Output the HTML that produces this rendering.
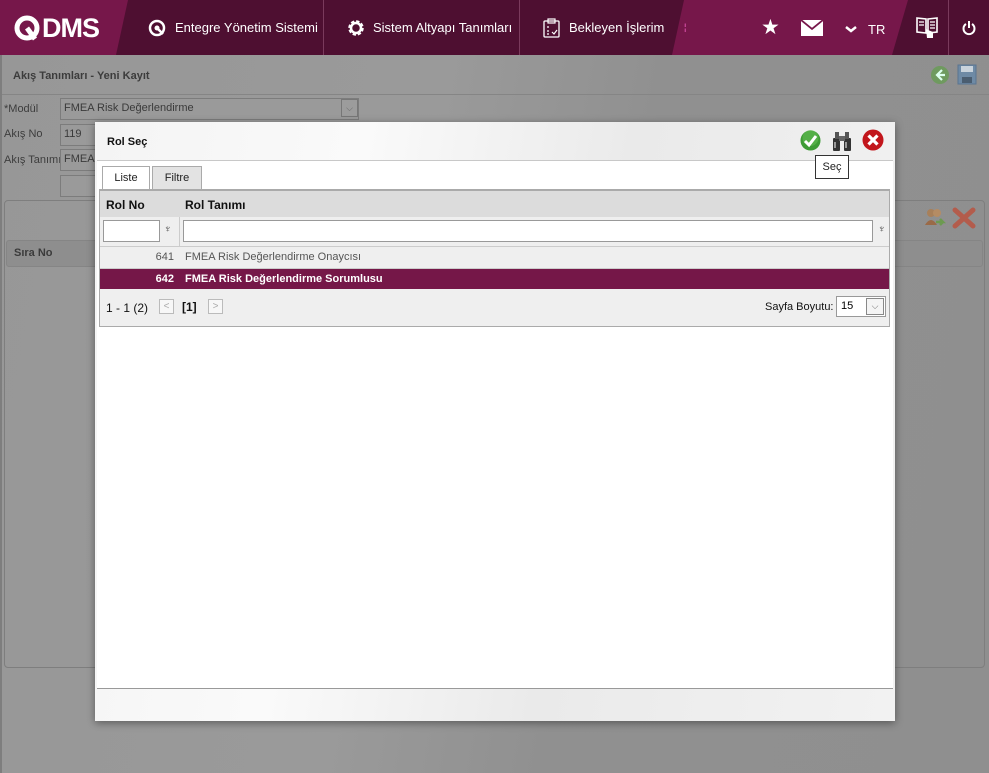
<!DOCTYPE html>
<html><head><meta charset="utf-8"><style>
*{box-sizing:border-box;margin:0;padding:0}
body{width:989px;height:773px;overflow:hidden;font-family:"Liberation Sans",sans-serif;font-size:12px;position:relative;background:#969696}
.abs{position:absolute}
.hdr{left:0;top:0;width:989px;height:55px;background:#4e0f31;color:#fff;overflow:hidden}
.hdr .t{position:absolute;top:20px;font-size:13px;color:#fff}
.sep{position:absolute;top:0;width:1px;height:55px;background:#7a3a5c}
.pg{color:#444}
.inp{position:absolute;border:1px solid #7c7c7c;background:#9a9a9a;color:#3a3a3a;font-size:11px;padding:3px 3px}
.lbl{position:absolute;color:#3d3d3d;font-size:11px}
.modal{left:95px;top:122px;width:800px;height:599px;background:linear-gradient(100deg,#f4f4f4 0%,#fafafa 30%,#eaeaea 60%,#f2f2f2 100%);box-shadow:0 2px 8px rgba(0,0,0,.4)}
.inner{position:absolute;left:2px;top:38px;width:796px;height:529px;background:#fff;border-top:1px solid #c8c8c8;border-bottom:1px solid #999}
.tab{position:absolute;top:5px;height:23px;border:1px solid #aaa;border-bottom:none;font-size:11px;padding:5px 0;text-align:center;color:#222}
.grid{position:absolute;left:2px;top:28px;width:791px;height:138px;border:1px solid #aaa;border-top:2px solid #aaa;background:#efefef}
.ghd{position:absolute;left:0;top:0;width:789px;height:26px;background:#dcdcdc;font-weight:bold;font-size:12px;color:#111}
.fi{position:absolute;top:31px;height:22px;background:#fff;border:1px solid #999}
.row{position:absolute;left:0;width:789px;height:21px;font-size:11px;line-height:20px}
</style></head><body>
<!-- header -->
<div class="abs hdr">
  <div class="abs" style="left:0;top:0;width:128px;height:55px;background:#76174a;clip-path:polygon(0 0,100% 0,116px 100%,0 100%)"></div>
  <div class="abs" style="left:172px;top:0;width:236px;height:55px;background:#76174a;clip-path:polygon(12px 0,100% 0,220px 100%,0 100%);left:672px"></div>
  <div class="abs" style="left:14px;top:13px;font-size:27px;font-weight:bold;letter-spacing:-1px;color:#fff;display:flex;align-items:center">
    <svg width="26" height="28" viewBox="0 0 26 28"><circle cx="13" cy="13" r="10" fill="none" stroke="#fff" stroke-width="5"/><path d="M13 13 L21 24" stroke="#fff" stroke-width="5"/></svg><span style="margin-left:2px">DMS</span></div>
  <svg class="abs" style="left:148px;top:19px" width="18" height="18" viewBox="0 0 18 18"><circle cx="9" cy="9" r="7" fill="none" stroke="#fff" stroke-width="2.5"/><circle cx="9" cy="9" r="2.5" fill="#fff"/><path d="M10 10 L15 15" stroke="#fff" stroke-width="2.5"/></svg>
  <div class="t" style="left:175px">Entegre Yönetim Sistemi</div>
  <div class="sep" style="left:323px"></div>
  <svg class="abs" style="left:346px;top:18px" width="20" height="20" viewBox="0 0 20 20"><circle cx="10" cy="10" r="6" fill="none" stroke="#fff" stroke-width="3.5" stroke-dasharray="3 1.7"/><circle cx="10" cy="10" r="5" fill="none" stroke="#fff" stroke-width="2.5"/></svg>
  <div class="t" style="left:373px">Sistem Altyapı Tanımları</div>
  <div class="sep" style="left:519px"></div>
  <svg class="abs" style="left:543px;top:18px" width="17" height="20" viewBox="0 0 17 20"><rect x="1" y="3" width="15" height="16" rx="1" fill="none" stroke="#fff" stroke-width="1.3"/><rect x="5" y="1" width="7" height="4" fill="none" stroke="#fff" stroke-width="1.2"/><path d="M4 9h2M4 13h2M4 16h2M9 14l2 2 3-4" stroke="#fff" stroke-width="1.2" fill="none"/></svg>
  <div class="t" style="left:569px">Bekleyen İşlerim</div>
  <div class="t" style="left:684px;font-size:9px;top:22px;color:#f6c">¦</div>
  <div class="t" style="left:761px;top:15px;font-size:21px">★</div>
  <svg class="abs" style="left:801px;top:20px" width="22" height="16" viewBox="0 0 22 16"><rect width="22" height="16" fill="#fff"/><path d="M0 0 L11 9 L22 0" stroke="#76174a" stroke-width="1.8" fill="none"/></svg>
  <svg class="abs" style="left:845px;top:26px" width="12" height="8" viewBox="0 0 12 8"><path d="M1 1 L6 5 L11 1" stroke="#fff" stroke-width="2.5" fill="none"/></svg>
  <div class="t" style="left:868px;font-size:13px;top:22px">TR</div>
  <svg class="abs" style="left:916px;top:16px" width="22" height="24" viewBox="0 0 22 24"><path d="M1 2 L10 3 L10 17 L1 16Z M12 3 L21 2 L21 16 L12 17Z" fill="none" stroke="#fff" stroke-width="1.6"/><path d="M3 6h5M3 9h5M14 6h5M14 9h5M14 12h5" stroke="#fff" stroke-width="1.2"/><path d="M10 13 L11 22 L17 22 L17 16 L12 14Z" fill="#fff"/></svg>
  <div class="sep" style="left:948px"></div>
  <svg class="abs" style="left:962px;top:20px" width="14" height="16" viewBox="0 0 14 16"><path d="M4 4 A5.5 5.5 0 1 0 10 4" stroke="#fff" stroke-width="2" fill="none"/><path d="M7 1 V8" stroke="#fff" stroke-width="2"/></svg>
</div>
<!-- page behind -->
<div class="abs" style="left:0;top:55px;width:989px;height:718px;background:linear-gradient(100deg,#979797 0%,#9a9a9a 40%,#909090 60%,#8f8f8f 100%)"></div>
<div class="abs" style="left:0;top:55px;width:2px;height:718px;background:#7e7e7e"></div>
<div class="lbl" style="left:13px;top:70px;font-weight:bold;color:#3c3c3c">Akış Tanımları - Yeni Kayıt</div>
<svg class="abs" style="left:930px;top:65px" width="20" height="20" viewBox="0 0 20 20"><circle cx="10" cy="10" r="9" fill="#6f9a5f"/><path d="M12 5 L7 10 L12 15 M7 10 H15" stroke="#dfe" stroke-width="2.2" fill="none"/></svg>
<svg class="abs" style="left:957px;top:64px" width="20" height="21" viewBox="0 0 20 21"><rect x="1" y="1" width="18" height="19" fill="#6e8aa5" stroke="#5a7490"/><rect x="4" y="2" width="12" height="6" fill="#c9d3dc"/><rect x="5" y="13" width="10" height="6" fill="#4a5d70"/></svg>
<div class="abs" style="left:2px;top:94px;width:987px;height:1px;background:#858585"></div>
<div class="lbl" style="left:4px;top:103px">*Modül</div>
<div class="inp" style="left:60px;top:98px;width:299px;height:22px">FMEA Risk Değerlendirme</div>
<div class="abs" style="left:341px;top:99px;width:17px;height:18px;border:1px solid #777;background:#9c9c9c;color:#666;font-size:9px;text-align:center;line-height:16px">⌵</div>
<div class="lbl" style="left:4px;top:128px">Akış No</div>
<div class="inp" style="left:60px;top:124px;width:40px;height:22px">119</div>
<div class="lbl" style="left:4px;top:154px">Akış Tanımı</div>
<div class="inp" style="left:60px;top:149px;width:40px;height:22px">FMEA</div>
<div class="inp" style="left:60px;top:175px;width:40px;height:22px"></div>
<div class="abs" style="left:4px;top:200px;width:981px;height:468px;border:1px solid #7e7e7e;border-radius:4px"></div>
<div class="abs" style="left:6px;top:240px;width:977px;height:27px;background:#8e8e8e;border:1px solid #858585;border-radius:3px"></div>
<div class="lbl" style="left:14px;top:247px;font-weight:bold;font-size:11px;color:#3b3b3b">Sıra No</div>
<svg class="abs" style="left:924px;top:207px" width="22" height="22" viewBox="0 0 22 22"><circle cx="7" cy="6" r="4" fill="#a8805a"/><circle cx="13" cy="6" r="4" fill="#b58c64"/><path d="M1 18 Q7 8 13 18Z" fill="#9a6a48"/><path d="M12 15 h7 l-3 -3 M19 15 l-3 3" stroke="#6c9a50" stroke-width="2.5" fill="none"/></svg>
<svg class="abs" style="left:952px;top:207px" width="24" height="22" viewBox="0 0 24 22"><path d="M3 3 L21 19 M21 3 L3 19" stroke="#b35c4c" stroke-width="5" stroke-linecap="round"/></svg>
<!-- modal -->
<div class="abs modal">
  <div class="abs" style="left:12px;top:14px;font-size:11px;font-weight:bold;color:#111">Rol Seç</div>
  <svg class="abs" style="left:705px;top:8px" width="21" height="21" viewBox="0 0 21 21"><circle cx="10.5" cy="10.5" r="10" fill="#3d9b35"/><circle cx="10.5" cy="8" r="8" fill="#6cc45a" opacity=".5"/><path d="M5 11 L9 15 L16 6" stroke="#fff" stroke-width="3" fill="none"/></svg>
  <svg class="abs" style="left:736px;top:8px" width="22" height="22" viewBox="0 0 22 22"><rect x="2" y="8" width="7" height="13" rx="1" fill="#333"/><rect x="13" y="8" width="7" height="13" rx="1" fill="#333"/><rect x="4" y="2" width="4" height="7" fill="#555"/><rect x="14" y="2" width="4" height="7" fill="#555"/><rect x="8" y="6" width="6" height="5" fill="#666"/><rect x="3" y="12" width="2" height="6" fill="#999"/><rect x="14" y="12" width="2" height="6" fill="#999"/></svg>
  <svg class="abs" style="left:767px;top:7px" width="22" height="22" viewBox="0 0 22 22"><circle cx="11" cy="11" r="10.5" fill="#c2161c"/><path d="M6.5 6.5 L15.5 15.5 M15.5 6.5 L6.5 15.5" stroke="#fff" stroke-width="3.2"/></svg>
  <div class="abs" style="left:720px;top:33px;width:34px;height:24px;background:#fff;border:1px solid #333;font-size:11px;text-align:center;line-height:22px;z-index:3;color:#222">Seç</div>
  <div class="inner">
    <div class="tab" style="left:5px;width:48px;background:#fff;height:24px">Liste</div>
    <div class="tab" style="left:55px;width:50px;background:#e3e3e3">Filtre</div>
    <div class="grid">
      <div class="ghd"><span class="abs" style="left:6px;top:7px">Rol No</span><span class="abs" style="left:85px;top:7px">Rol Tanımı</span></div>
      <div class="abs" style="left:79px;top:26px;width:1px;height:30px;background:#ccc"></div>
      <div class="fi" style="left:3px;width:57px;top:29px"></div>
      <div class="abs" style="left:64px;top:33px;font-size:10px;color:#444">♆</div>
      <div class="fi" style="left:83px;width:690px;top:29px"></div>
      <div class="abs" style="left:778px;top:33px;font-size:10px;color:#444">♆</div>
      <div class="abs" style="left:0;top:55px;width:789px;height:1px;background:#ccc"></div>
      <div class="row" style="top:56px;color:#555"><span class="abs" style="right:715px">641</span><span class="abs" style="left:85px">FMEA Risk Değerlendirme Onaycısı</span></div>
      <div class="row" style="top:77px;background:#751748;color:#fff;font-weight:bold;border-top:1px solid #ccc"><span class="abs" style="right:715px">642</span><span class="abs" style="left:85px">FMEA Risk Değerlendirme Sorumlusu</span></div>
      <div class="abs" style="left:6px;top:110px;font-size:12px;color:#111">1 - 1 (2)</div>
      <div class="abs" style="left:59px;top:108px;width:15px;height:15px;border:1px solid #bbb;background:#f7f7f7;color:#aaa;font-size:10px;text-align:center;line-height:13px">&lt;</div>
      <div class="abs" style="left:82px;top:109px;font-weight:bold;font-size:12px;color:#111">[1]</div>
      <div class="abs" style="left:108px;top:108px;width:15px;height:15px;border:1px solid #bbb;background:#f7f7f7;color:#aaa;font-size:10px;text-align:center;line-height:13px">&gt;</div>
      <div class="abs" style="left:665px;top:110px;font-size:11px;color:#111">Sayfa Boyutu:</div>
      <div class="abs" style="left:736px;top:105px;width:50px;height:21px;border:1px solid #999;background:#fff;font-size:11px;padding:3px 4px">15</div>
      <div class="abs" style="left:766px;top:107px;width:18px;height:17px;border:1px solid #888;background:#f4f4f4;font-size:9px;color:#666;text-align:center;line-height:15px">⌵</div>
    </div>
  </div>
</div>
</body></html>
